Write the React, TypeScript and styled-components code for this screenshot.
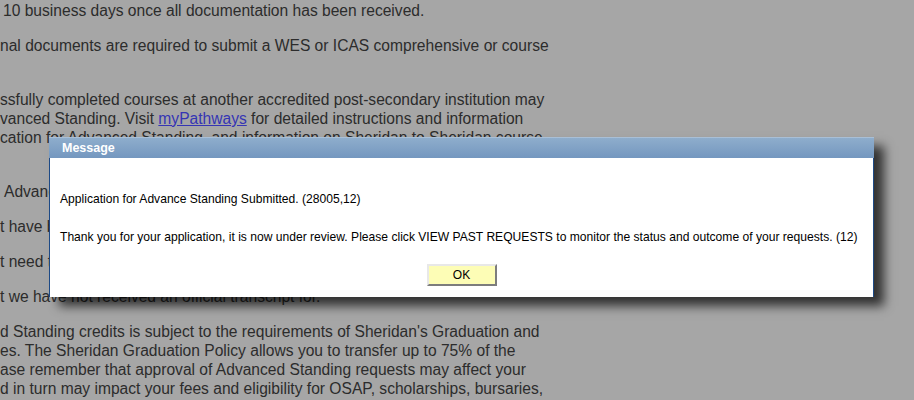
import React from "react";
import styled, { createGlobalStyle } from "styled-components";

const GlobalStyle = createGlobalStyle`
  html, body {
    margin: 0;
    padding: 0;
    background: #a6a6a6;
  }
  body {
    width: 914px;
    height: 400px;
    overflow: hidden;
    font-family: "Liberation Sans", Arial, sans-serif;
  }
`;

const Page = styled.div`
  position: relative;
  width: 914px;
  height: 400px;
  overflow: hidden;
  padding-top: 1px;
  box-sizing: border-box;
  background: #a6a6a6;
  color: #2c2c2c;
  font-size: 15.6px;
`;

const Para = styled.p<{ $indent?: number }>`
  margin: 0 0 16px 0;
  padding-left: ${(p) => p.$indent || 0}px;
  white-space: nowrap;
  line-height: 19px;
`;

const Link = styled.a`
  color: #3535b4;
  text-decoration: underline;
`;

const Dialog = styled.div`
  position: absolute;
  left: 49px;
  top: 137px;
  width: 825px;
  box-shadow: 10px 9px 10px rgba(0, 0, 0, 0.7);
`;

const TitleBar = styled.div`
  height: 21px;
  padding-left: 13px;
  display: flex;
  align-items: center;
  border-top: 1px solid #a9bfd6;
  box-sizing: border-box;
  background: linear-gradient(#8eadcc, #7497bf);
  color: #ffffff;
  font-size: 12.5px;
  font-weight: bold;
`;

const Body = styled.div`
  background: #ffffff;
  border-left: 1px solid #1d4a86;
  border-right: 1px solid #1d4a86;
  padding: 34px 10px 10px 10px;
  height: 139px;
  box-sizing: border-box;
  display: flex;
  flex-direction: column;
  color: #000000;
  font-size: 12.1px;
`;

const Text = styled.div<{ $gap: number }>`
  line-height: 14px;
  margin-bottom: ${(p) => p.$gap}px;
`;

const Buttons = styled.div`
  display: flex;
  justify-content: center;
`;

const OkButton = styled.button`
  width: 70px;
  height: 22px;
  padding: 0;
  background: #fdfdb6;
  border: 2px solid;
  border-color: #e8e8e8 #7d7d7d #7d7d7d #e8e8e8;
  font-family: "Liberation Sans", Arial, sans-serif;
  font-size: 12px;
  color: #000000;
`;

export default function App() {
  return (
    <>
      <GlobalStyle />
      <Page>
        <Para $indent={3}>10 business days once all documentation has been received.</Para>
        <Para>
          nal documents are required to submit a WES or ICAS comprehensive or course
          <br />
          &nbsp;
        </Para>
        <Para>
          ssfully completed courses at another accredited post-secondary institution may
          <br />
          vanced Standing. Visit <Link href="#">myPathways</Link> for detailed instructions and information
          <br />
          cation for Advanced Standing, and information on Sheridan to Sheridan course
          <br />
          &nbsp;
        </Para>
        <Para $indent={4}>Advanced Standing requests will be reviewed for</Para>
        <Para>t have been assessed previously</Para>
        <Para>t need to be reviewed again</Para>
        <Para>t we have not received an official transcript for.</Para>
        <Para>
          d Standing credits is subject to the requirements of Sheridan's Graduation and
          <br />
          es. The Sheridan Graduation Policy allows you to transfer up to 75% of the
          <br />
          ase remember that approval of Advanced Standing requests may affect your
          <br />
          d in turn may impact your fees and eligibility for OSAP, scholarships, bursaries,
        </Para>

        <Dialog>
          <TitleBar>Message</TitleBar>
          <Body>
            <Text $gap={24}>Application for Advance Standing Submitted. (28005,12)</Text>
            <Text $gap={20}>
              Thank you for your application, it is now under review. Please click VIEW PAST
              REQUESTS to monitor the status and outcome of your requests. (12)
            </Text>
            <Buttons>
              <OkButton>OK</OkButton>
            </Buttons>
          </Body>
        </Dialog>
      </Page>
    </>
  );
}
